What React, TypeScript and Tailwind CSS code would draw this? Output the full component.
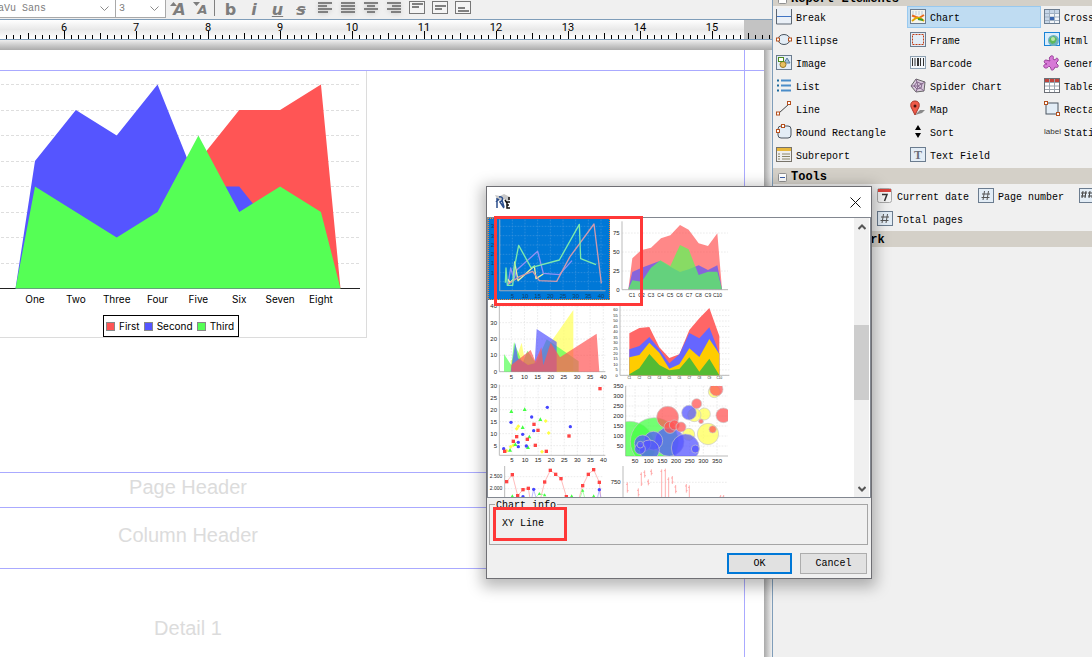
import { useState, type ReactNode } from "react";

type Tool = { label: string; icon: ReactNode };

const frame = <rect x="0.5" y="0.5" width="15" height="14" fill="#e3edf6" stroke="#6b7c8f" />;

const handle = (x: number, y: number) => (
  <rect x={x} y={y} width="3" height="3" fill="#fff" stroke="#b4501e" strokeWidth="1" />
);

const hashIcon = (
  <>
    {frame}
    <path d="M6.5 3L5 12M10.5 3L9 12M4 6h8M3.5 9.5h8" stroke="#555" fill="none" />
  </>
);

const elements: Tool[] = [
  {
    label: "Break",
    icon: (
      <>
        <rect x="0.5" y="-1" width="15" height="16" fill="#eaf0f7" />
        <path d="M0.5 0v15h15V0" fill="none" stroke="#5c6672" />
        <path d="M1 7.5h14" stroke="#3f74c4" />
      </>
    ),
  },
  {
    label: "Chart",
    icon: (
      <>
        <rect x="0.5" y="0.5" width="15" height="14" fill="#f4f4ee" stroke="#6b7c8f" />
        <path d="M2 3h12M2 5h12" stroke="#b9cad8" strokeDasharray="2 1" />
        <path d="M2 6.5l4 1.500 3 1 5-3" stroke="#e86a1c" strokeWidth="2" fill="none" />
        <path d="M2 12l4-3 4 0 4 3" stroke="#e0a800" strokeWidth="2" fill="none" />
        <path d="M8 10l5 1" stroke="#3d9a2a" strokeWidth="2" />
      </>
    ),
  },
  {
    label: "Crosstab",
    icon: (
      <>
        <rect x="0.5" y="0.5" width="15" height="14" fill="#f2f6fa" stroke="#6b7c8f" />
        <path d="M1 1h14v3H1zM1 4h4v10H1z" fill="#c6d6e8" />
        <path d="M1 4.5h14M1 8h14M1 11.5h14M5.5 1v13M10.5 1v13" stroke="#9fb0c2" />
        <rect x="6" y="8" width="4" height="3" fill="#3a66b0" />
      </>
    ),
  },
  {
    label: "Ellipse",
    icon: (
      <>
        <ellipse cx="8" cy="7.5" rx="6" ry="5" fill="#e3edf6" stroke="#4a5560" />
        {handle(0.5, 6)}
        {handle(12.5, 6)}
      </>
    ),
  },
  {
    label: "Frame",
    icon: (
      <>
        {frame}
        <rect x="2.5" y="2.5" width="11" height="10" fill="none" stroke="#c03c14" strokeDasharray="2 1" />
      </>
    ),
  },
  {
    label: "Html",
    icon: (
      <>
        <rect x="0.5" y="0.5" width="15" height="13" fill="#d9ecfb" stroke="#1883d7" />
        <circle cx="9.5" cy="8.5" r="5.5" fill="#6cb0c0" />
        <path d="M6 6l4-2 3 3-2 4-3 1-3-3z" fill="#5cb85c" />
        <circle cx="9" cy="7" r="2" fill="#b8e6a8" />
      </>
    ),
  },
  {
    label: "Image",
    icon: (
      <>
        {frame}
        <path d="M8 8l3-5 3 5z" fill="#9fc0d8" stroke="#5a7fa0" />
        <circle cx="7" cy="9.5" r="3" fill="#e8c060" stroke="#9a7a28" />
        <rect x="2.5" y="2.5" width="5" height="4" fill="#fff" stroke="#4c8a1c" />
      </>
    ),
  },
  {
    label: "Barcode",
    icon: (
      <>
        <rect x="0.5" y="1.5" width="15" height="12" fill="#f2f6fa" stroke="#8ea1b2" />
        <path d="M2.5 3v8M5 3v8M10.5 3v8M13.5 3v8" stroke="#333" />
        <path d="M8 3v8" stroke="#333" strokeWidth="2" />
      </>
    ),
  },
  {
    label: "Generic Element",
    icon: (
      <path
        d="M7 1c2-1 3 1 2 3l2 1c1-3 4-2 3 1l-2 2 2 2c1 2-1 3-3 2l-1 2c-1 2-4 1-3-1l-2-2c-1 2-4 3-5 1s1-3 3-3C0 9-1 5 2 5l4 1c-1-2-1-4 1-5z"
        fill="#d678d6"
        stroke="#9a3f9a"
      />
    ),
  },
  {
    label: "List",
    icon: (
      <>
        <path d="M1 2.5h2M1 7.5h2M1 12.5h2" stroke="#1d6a9c" strokeWidth="2" />
        <path d="M5 2.5h10M5 7.5h10M5 12.5h10" stroke="#4a8cc8" strokeWidth="2" />
      </>
    ),
  },
  {
    label: "Spider Chart",
    icon: (
      <>
        <path d="M6 1l9 3-1 9-8 1-5-6z" fill="#d8c8dc" stroke="#666" />
        <path d="M6 1l2 7M15 4L8 8M14 13L8 8M6 14l2-6M1 8h7M7 4l5 2-1 4-4 1-3-3z" fill="none" stroke="#84688c" />
      </>
    ),
  },
  {
    label: "Table",
    icon: (
      <>
        <rect x="0.5" y="0.5" width="15" height="14" fill="#fff" stroke="#6b6f76" />
        <path d="M1 1h14v3H1z" fill="#c0443c" />
        <path d="M1 4.5h14M1 8h14M1 11.5h14M5.5 1v13M10.5 1v13" stroke="#9aa4ae" />
      </>
    ),
  },
  {
    label: "Line",
    icon: (
      <>
        <path d="M3 12L13 3" stroke="#444" />
        {handle(0.5, 11)}
        {handle(11.5, 0.5)}
      </>
    ),
  },
  {
    label: "Map",
    icon: (
      <>
        <path d="M5 14l5-5 5 0-3 3z" fill="#8a8a8a" />
        <path d="M5 14L1 6C0 2 2 0 5 0s5 2 4 6z" fill="#ef5a48" stroke="#a8382c" />
        <circle cx="5" cy="5" r="1.5" fill="#4a1410" />
      </>
    ),
  },
  {
    label: "Rectangle",
    icon: (
      <>
        <rect x="2" y="2" width="12" height="11" fill="#e3edf6" stroke="#4a5560" />
        {handle(0.5, 0.5)}
        {handle(12.5, 11.5)}
      </>
    ),
  },
  {
    label: "Round Rectangle",
    icon: (
      <>
        <rect x="2" y="2" width="13" height="12" rx="3" fill="#e3edf6" stroke="#4a5560" />
        {handle(5.5, 0.5)}
        {handle(0.5, 5.5)}
      </>
    ),
  },
  { label: "Sort", icon: <path d="M8 1l3 5H5zM8 14l3-5H5z" fill="#000" /> },
  {
    label: "Static Text",
    icon: (
      <text x="0" y="10" fontSize="8" fontFamily="Liberation Sans" fill="#333">
        label
      </text>
    ),
  },
  {
    label: "Subreport",
    icon: (
      <>
        <rect x="0.5" y="0.5" width="15" height="14" fill="#eee" stroke="#77736a" />
        <path d="M1 1h14v3H1z" fill="#e8b83c" />
        <path d="M2 7h2M2 9.5h2M2 12h2M6 7h8M6 9.5h8M6 12h8" stroke="#8a8468" />
      </>
    ),
  },
  {
    label: "Text Field",
    icon: (
      <>
        {frame}
        <text x="8" y="12" fontSize="12" fontWeight="bold" fontFamily="Liberation Serif" textAnchor="middle" fill="#6a6e78">
          T
        </text>
      </>
    ),
  },
];

function Icon({ children }: { children: ReactNode }) {
  return (
    <svg width="16" height="16" viewBox="0 0 16 16" className="shrink-0 overflow-visible">
      {children}
    </svg>
  );
}

function PaletteItem({ tool, selected = false, className = "" }: { tool: Tool; selected?: boolean; className?: string }) {
  return (
    <button
      type="button"
      className={`mb-px flex h-[22px] items-center gap-1 border pl-0.5 text-left whitespace-nowrap ${
        selected ? "border-[#99c9ef] bg-[#bfdcf2]" : "border-transparent"
      } ${className}`}
    >
      <Icon>{tool.icon}</Icon>
      <span className="pt-[3px]">{tool.label}</span>
    </button>
  );
}

function SectionHeader({ title, className = "" }: { title: string; className?: string }) {
  return (
    <h2 className={`flex h-4 items-center gap-1 bg-[#d4d0c8] pt-0.5 pl-[5px] text-[12px] leading-4 font-bold ${className}`}>
      <svg width="9" height="9" viewBox="0 0 9 9">
        <rect x="0.5" y="0.5" width="8" height="8" rx="1" fill="#fff" stroke="#919191" />
        <path d="M2 4.5h5" stroke="#3c5ea8" />
      </svg>
      {title}
    </h2>
  );
}

function Palette() {
  return (
    <aside className="w-[320px] shrink-0 overflow-hidden border-l border-[#7f9db9] bg-[#f0f0f0]">
      <SectionHeader title="Report Elements" className="-mt-2.5" />
      <div className="mb-px grid grid-cols-[134px_134px_134px]">
        {elements.map((tool) => (
          <PaletteItem key={tool.label} tool={tool} selected={tool.label === "Chart"} />
        ))}
      </div>
      <SectionHeader title="Tools" />
      <div className="mt-px grid grid-cols-[101px_101px_101px_101px]">
        <PaletteItem
          className="col-start-2"
          tool={{
            label: "Current date",
            icon: (
              <>
                <rect x="0.5" y="0.5" width="14" height="14" rx="2" fill="#f4f4f4" stroke="#a8a8a8" />
                <path d="M1 1h13v3H1z" fill="#d8433c" />
                <path d="M5 6.5h5L7.5 13" fill="none" stroke="#333" strokeWidth="1.5" />
              </>
            ),
          }}
        />
        <PaletteItem tool={{ label: "Page number", icon: hashIcon }} />
        <PaletteItem
          tool={{
            label: "Page X of Y",
            icon: (
              <>
                {frame}
                <path d="M4 3L3 10M7 3L6 10M2 5h6M2 8h5M11 3l-1 7M14 3l-1 7M9 5h6M9 8h5" stroke="#444" fill="none" />
              </>
            ),
          }}
        />
        <PaletteItem className="col-start-2" tool={{ label: "Total pages", icon: hashIcon }} />
      </div>
      <SectionHeader title="Map Framework" />
    </aside>
  );
}

function Chevron() {
  return (
    <svg width="9" height="6" viewBox="0 0 9 6" className="pointer-events-none absolute top-1.5 right-1.5">
      <path d="M0.5 0.5l4 4 4-4" fill="none" stroke="#8a8a8a" />
    </svg>
  );
}

const alignIcons = [
  "M2 3h14M2 6h9M2 9h14M2 12h10",
  "M2 3h14M2 6h14M2 9h14M2 12h14",
  "M2 3h14M5 6h8M2 9h14M5 12h8",
  "M2 3h14M7 6h9M2 9h14M6 12h10",
];
const boxIcons = ["M4 4h11M4 7h7", "M4 6h11M4 9h7", "M4 8h7M4 11h11"];

function Toolbar() {
  return (
    <div className="flex h-[19px] shrink-0 items-start overflow-hidden bg-[#f0f0f0] text-[#7d7d7d]">
      <div className="relative -ml-6 h-[18px] w-[140px] border-r border-b border-[#a9a9a9] bg-white">
        <select aria-label="Font name" className="h-[17px] w-full appearance-none bg-transparent pl-1 text-[10px] leading-4">
          <option>DejaVu Sans</option>
        </select>
        <Chevron />
      </div>
      <div className="relative h-[18px] w-[50px] border-r border-b border-[#a9a9a9] bg-white">
        <select aria-label="Font size" className="h-[17px] w-full appearance-none bg-transparent pl-[3px] text-[10px] leading-4">
          <option>3</option>
        </select>
        <Chevron />
      </div>
      <div className="flex font-['DejaVu_Sans'] text-[16px] leading-[19px] font-bold [text-shadow:1px_1px_1px_#bbb]">
        <button type="button" aria-label="Increase font size" className="relative w-[23px] pl-1 italic">
          A
          <svg width="7" height="4" className="absolute top-0.5 left-1">
            <path d="M0 4l3.500-4 3.500 4z" fill="#7d7d7d" />
          </svg>
        </button>
        <button type="button" aria-label="Decrease font size" className="relative w-[23px] pl-1 text-[13px] italic">
          A
          <svg width="7" height="4" className="absolute top-0.5 left-1">
            <path d="M0 0l3.500 4 3.500-4z" fill="#7d7d7d" />
          </svg>
        </button>
        <div className="mr-1 ml-0.5 h-4 w-px bg-[#808080]" />
        <button type="button" className="w-[23px]">b</button>
        <button type="button" className="w-6 italic">i</button>
        <button type="button" className="w-[23px] italic underline underline-offset-1">u</button>
        <button type="button" className="w-6 italic line-through">s</button>
        {alignIcons.map((d) => (
          <button key={d} type="button" aria-label="Align text" className="flex h-4 w-[23px] justify-center">
            <svg width="18" height="16" className="drop-shadow-sm">
              <path d={d} stroke="#808080" strokeWidth="2" />
            </svg>
          </button>
        ))}
        {boxIcons.map((d) => (
          <button key={d} type="button" aria-label="Vertical align" className="flex h-4 w-[23px] justify-center">
            <svg width="18" height="16">
              <rect x="1.500" y="1.500" width="15" height="12" fill="#f4f4f4" stroke="#777" />
              <path d={d} stroke="#808080" strokeWidth="2" />
            </svg>
          </button>
        ))}
      </div>
    </div>
  );
}

function Ruler() {
  const ticks = Array.from({ length: 108 }, (_, i) => i - 8);
  return (
    <div className="relative h-[21px] shrink-0 overflow-hidden border-y border-[#7f9db9] bg-linear-to-b from-white via-[#e9e9e9] to-white">
      <div className="absolute inset-y-0 right-0 w-7 bg-[#c3c3c3]" />
      <svg width="100%" height="19" className="absolute inset-0">
        {ticks.map((i) => {
          const x = Math.floor(64 + i * 7.2) + 0.5;
          const top = i % 10 === 0 ? 11 : i % 5 === 0 ? 13 : 15;
          return <path key={i} d={`M${x} ${top}V19`} stroke="#000" />;
        })}
      </svg>
      <div className="relative ml-7 flex font-[Roboto] text-[11px] leading-[15px]">
        {[6, 7, 8, 9, 10, 11, 12, 13, 14, 15].map((n) => (
          <span key={n} className="w-[72px] shrink-0 text-center">
            {n}
          </span>
        ))}
      </div>
    </div>
  );
}

const categories = ["One", "Two", "Three", "Four", "Five", "Six", "Seven", "Eight"];
const series = [
  { name: "First", color: "#ff5555", values: [1, 4, 3, 5, 5, 7, 7, 8] },
  { name: "Second", color: "#5555ff", values: [5, 7, 6, 8, 4, 4, 2, 1] },
  { name: "Third", color: "#55ff55", values: [4, 3, 2, 3, 6, 3, 4, 3] },
];

const catX = (i: number) => 35 + i * 40.85;
const valY = (v: number) => 217.5 - v * 25.5;

function AreaChart() {
  return (
    <div className="w-[367px] border-r border-b border-[#dcdcdc]">
      <svg width="366" height="244" className="block">
        {[1, 2, 3, 4, 5, 6, 7, 8].map((v) => (
          <path key={v} d={`M1 ${Math.floor(valY(v)) + 0.5}H359`} stroke="#dedede" strokeDasharray="3 2" />
        ))}
        <path d="M0 217.500H360" stroke="#222" />
        {series.map((s) => (
          <polygon
            key={s.name}
            fill={s.color}
            points={`15.500,217.500 ${s.values.map((v, i) => `${catX(i)},${valY(v)}`).join(" ")} 340.500,217.500`}
          />
        ))}
        {categories.map((c, i) => (
          <text key={c} x={catX(i)} y="232" fontSize="10" textAnchor="middle" fontFamily="Inter">
            {c}
          </text>
        ))}
      </svg>
      <div className="ml-[103px] flex h-[22px] w-fit items-center gap-1 border border-black pr-1 pl-[2px] font-[Inter] text-[10px] leading-3">
        {series.map((s) => (
          <span key={s.name} className="flex items-center gap-1">
            <span className="size-[9px] border border-[#888]" style={{ backgroundColor: s.color }} />
            {s.name}
          </span>
        ))}
      </div>
    </div>
  );
}

function BandLabel({ children }: { children: ReactNode }) {
  return (
    <p className="w-[376px] pb-1.5 text-center font-['Liberation_Sans'] text-[20px] leading-6 text-[#dcdcdc]">{children}</p>
  );
}

function ReportPage() {
  return (
    <div className="min-h-0 flex-1 overflow-hidden bg-[#f0f0f0]">
      <div className="h-2.5 bg-linear-to-b from-[#eee] to-[#acacac]" />
      <div className="flex h-full">
        <div className="flex flex-1 flex-col bg-white bg-[linear-gradient(#aaaaff,#aaaaff)] bg-[length:1px_100%] bg-[position:right_19px_top] bg-no-repeat">
          <div className="h-[21px] shrink-0 border-b border-[#aaaaff]" />
          <div className="h-[402px] shrink-0 border-b border-[#aaaaff]">
            <AreaChart />
          </div>
          <div className="flex h-[35px] shrink-0 items-center border-b border-[#aaaaff]">
            <BandLabel>Page Header</BandLabel>
          </div>
          <div className="flex h-[61px] shrink-0 items-center border-b border-[#aaaaff]">
            <BandLabel>Column Header</BandLabel>
          </div>
          <div className="flex h-[124px] shrink-0 items-center">
            <BandLabel>Detail 1</BandLabel>
          </div>
        </div>
        <div className="w-2 bg-linear-to-r from-[#a9a9a9] to-[#f0f0f0]" />
      </div>
    </div>
  );
}

type Label = [string, number];

// The preview drawings share one scale: three units to a pixel.
function Axes({
  left,
  right,
  top,
  bottom,
  xs = [],
  ys = [],
  size = 18,
  color = "#222",
  grid = "#e2e2e2",
}: {
  left: number;
  right: number;
  top: number;
  bottom: number;
  xs?: Label[];
  ys?: Label[];
  size?: number;
  color?: string;
  grid?: string;
}) {
  return (
    <g fontFamily="Liberation Sans" fontSize={size} fill={color}>
      {ys.map(([t, y]) => (
        <g key={t}>
          <path d={`M${left} ${y}H${right}`} stroke={grid} strokeWidth="2" strokeDasharray="5 4" />
          <text x={left - 7} y={y + size / 3} textAnchor="end">
            {t}
          </text>
        </g>
      ))}
      {xs.map(([t, x]) => (
        <g key={t}>
          <path d={`M${x} ${top}V${bottom}`} stroke={grid} strokeWidth="2" strokeDasharray="5 4" />
          <text x={x} y={bottom + size + 3} textAnchor="middle">
            {t}
          </text>
        </g>
      ))}
      <path d={`M${left} ${top}V${bottom}H${right}`} fill="none" stroke="#bbb" strokeWidth="3" />
    </g>
  );
}

const fives = (start: number, step: number): Label[] =>
  [5, 10, 15, 20, 25, 30, 35, 40].map((n, i) => [String(n), start + i * step]);

const scatter = {
  red: [[342, 266], [144, 373], [156, 391], [92, 410], [124, 418], [82, 424], [148, 436], [56, 454], [181, 454], [249, 408]],
  blue: [[184, 322], [137, 351], [75, 367], [253, 380], [143, 392], [110, 403], [97, 427], [97, 440], [121, 438], [53, 446]],
  green: [[76, 334], [116, 328], [163, 358], [110, 382], [130, 410], [88, 433], [126, 442], [72, 450]],
  yellow: [[97, 379], [92, 386], [179, 363], [188, 399], [82, 436], [74, 440], [168, 455], [62, 452]],
};

const bubbles: [string, number, number, number][] = [
  ["#44ff44", 430, 440, 76],
  ["#44ff44", 505, 425, 72],
  ["#ffff55", 666, 402, 32],
  ["#ffff55", 655, 342, 18],
  ["#ffff55", 625, 345, 20],
  ["#ffff55", 608, 403, 18],
  ["#ffff55", 685, 275, 18],
  ["#5555ff", 550, 425, 44],
  ["#5555ff", 598, 444, 42],
  ["#5555ff", 502, 422, 28],
  ["#5555ff", 470, 430, 25],
  ["#5555ff", 490, 450, 30],
  ["#5555ff", 462, 447, 16],
  ["#5555ff", 463, 434, 10],
  ["#5555ff", 609, 338, 22],
  ["#5555ff", 628, 447, 12],
  ["#ff5555", 545, 352, 33],
  ["#ff5555", 552, 382, 18],
  ["#ff5555", 565, 375, 15],
  ["#ff5555", 585, 381, 15],
  ["#ff5555", 632, 311, 15],
  ["#ff5555", 691, 268, 20],
  ["#ff5555", 712, 346, 22],
  ["#ff5555", 645, 364, 7],
  ["#ff5555", 680, 388, 11],
];

const stacked = [
  { color: "#ff6666", tops: [100, 84, 81, 142, 174, 163, 90, 55, 24, 108] },
  { color: "#6666ff", tops: [148, 138, 111, 148, 190, 163, 99, 115, 82, 160] },
  { color: "#ffcc00", tops: [172, 165, 128, 158, 206, 193, 145, 171, 117, 162] },
  { color: "#55bb33", tops: [223, 205, 162, 195, 211, 207, 172, 215, 176, 226] },
];

const timeRed = [
  [62, 545], [79, 524], [95, 587], [111, 569], [127, 565], [136, 620], [160, 610], [176, 546], [193, 511], [209, 523],
  [225, 536], [241, 590], [272, 620], [290, 557], [307, 523], [323, 509], [340, 547], [346, 610],
];

const candles = [
  [424, 547, 578], [457, 565, 590], [466, 517, 558], [476, 511, 533], [487, 538, 556], [496, 508, 526],
  [527, 508, 600], [538, 506, 600], [548, 532, 600], [559, 528, 552], [569, 555, 580], [601, 552, 578],
  [610, 556, 600], [704, 585, 600], [713, 585, 600],
];

const previews: { name: string; viewBox: string; drawing: ReactNode }[] = [
  {
    name: "XY Line",
    viewBox: "6 96 366 246",
    drawing: (
      <>
        <rect x="6" y="96" width="366" height="246" fill="#0078d7" />
        <Axes
          left={41}
          right={358}
          top={101}
          bottom={314}
          xs={fives(79, 38)}
          ys={[["35", 121], ["30", 149], ["25", 177], ["20", 205], ["15", 232], ["10", 260], ["5", 287]]}
          color="#0b3f70"
          grid="#3f96de"
        />
        <path d="M41 101V314H358" fill="none" stroke="#6f9cc4" strokeWidth="3" />
        <g fill="none" strokeWidth="4" strokeLinejoin="round">
          <polyline stroke="#9090f4" points="66,296 74,246 84,280 92,252 155,196 172,262 220,266 258,224" />
          <polyline stroke="#f0f09a" points="66,280 72,290 82,280 86,228 96,284 145,240 150,278 172,264" />
          <polyline stroke="#d09aac" points="64,296 100,272 140,256 160,284 212,286 252,212 324,114 346,292" />
          <polyline stroke="#7ceaac" points="58,290 60,246 64,298 80,298 86,240 98,178 135,245 220,222 280,115 284,218 330,236" />
        </g>
        <rect
          x="7.500"
          y="97.500"
          width="363"
          height="243"
          fill="none"
          stroke="#ff8728"
          strokeWidth="3"
          strokeDasharray="3 3"
          strokeDashoffset="1.500"
          shapeRendering="crispEdges"
        />
      </>
    ),
  },
  {
    name: "Area",
    viewBox: "372 96 366 246",
    drawing: (
      <>
        <Axes
          left={408}
          right={726}
          top={106}
          bottom={311}
          ys={[["75", 141], ["50", 198], ["25", 255], ["0", 311]]}
        />
        <g fontFamily="Liberation Sans" fontSize="15" fill="#222" textAnchor="middle">
          {["C1", "C2", "C3", "C4", "C5", "C6", "C7", "C8", "C9", "C10"].map((c, i) => (
            <text key={c} x={438 + i * 28.5} y="332">
              {c}
            </text>
          ))}
        </g>
        <g fillOpacity="0.7">
          <polygon fill="#ff5555" points="427,310 439,217 465,193 495,185 525,157 553,148 582,117 608,131 638,172 666,180 694,142 708,310" />
          <polygon fill="#5555ff" points="427,310 439,258 467,245 495,235 523,224 553,242 582,258 608,250 638,238 666,252 694,238 708,310" />
          <polygon fill="#55ff55" points="427,310 439,283 467,287 495,245 523,223 553,240 582,177 608,190 638,267 666,257 694,257 708,310" />
        </g>
      </>
    ),
  },
  {
    name: "XY Area",
    viewBox: "6 0 366 246",
    drawing: (
      <>
        <Axes
          left={40}
          right={358}
          top={18}
          bottom={215}
          xs={fives(76, 39.4)}
          ys={[["40", 18], ["30", 68], ["20", 117], ["10", 166], ["0", 215]]}
        />
        <g fillOpacity="0.7">
          <polygon fill="#ffff55" points="74,215 74,182 96,160 107,128 118,190 150,190 262,30 262,215" />
          <polygon fill="#55ff55" points="54,215 54,162 76,196 84,126 110,190 124,152 150,190 182,118 278,184 278,215" />
          <polygon fill="#5555ff" points="74,215 88,128 96,175 126,195 146,190 152,87 212,126 212,215" />
          <polygon fill="#ff5555" points="76,215 76,195 134,150 148,184 166,142 172,196 194,128 222,172 332,101 340,215" />
        </g>
      </>
    ),
  },
  {
    name: "Stacked Area",
    viewBox: "372 0 366 246",
    drawing: (
      <>
        <Axes
          left={402}
          right={730}
          top={18}
          bottom={226}
          size={12}
          ys={Array.from({ length: 13 }, (_, i): Label => [String(i * 5), 226 - i * 16.3])}
        />
        {stacked.map((s) => (
          <polygon key={s.color} fill={s.color} points={`430,226 ${s.tops.map((y, i) => `${430 + i * 30},${y}`).join(" ")} 700,226`} />
        ))}
        <g fontFamily="Liberation Sans" fontSize="9" fill="#222" textAnchor="middle">
          {stacked[0].tops.map((_, i) => (
            <text key={i} x={430 + i * 30} y="237">{`C${i + 1}`}</text>
          ))}
        </g>
      </>
    ),
  },
  {
    name: "Scatter",
    viewBox: "6 246 366 246",
    drawing: (
      <>
        <Axes
          left={40}
          right={358}
          top={254}
          bottom={466}
          xs={fives(78, 39.2)}
          ys={[["30", 258], ["25", 293], ["20", 329], ["15", 365], ["10", 401], ["5", 437]]}
        />
        {scatter.yellow.map(([x, y]) => (
          <path key={`${x}-${y}`} d={`M${x - 6} ${y}l6 -6l6 6l-6 6z`} fill="#ffff44" />
        ))}
        {scatter.green.map(([x, y]) => (
          <path key={`${x}-${y}`} d={`M${x - 6} ${y + 5}l6 -11l6 11z`} fill="#44ff44" />
        ))}
        {scatter.blue.map(([x, y]) => (
          <circle key={`${x}-${y}`} cx={x} cy={y} r="5" fill="#4444ff" />
        ))}
        {scatter.red.map(([x, y]) => (
          <rect key={`${x}-${y}`} x={x - 5} y={y - 5} width="10" height="10" fill="#ff4444" />
        ))}
      </>
    ),
  },
  {
    name: "Bubble",
    viewBox: "372 246 366 246",
    drawing: (
      <>
        <Axes
          left={419}
          right={726}
          top={258}
          bottom={468}
          xs={[50, 100, 150, 200, 250, 300, 350].map((n, i): Label => [String(n), 447 + i * 41])}
          ys={[350, 300, 250, 200, 150, 100, 50].map((n, i): Label => [String(n), 258 + i * 30])}
        />
        <clipPath id="bubble-plot">
          <rect x="419" y="258" width="307" height="210" />
        </clipPath>
        <g clipPath="url(#bubble-plot)" fillOpacity="0.75" stroke="#c8c8c8" strokeWidth="2">
          {bubbles.map(([color, x, y, r]) => (
            <circle key={`${x}-${y}`} cx={x} cy={y} r={r} fill={color} />
          ))}
        </g>
      </>
    ),
  },
  {
    name: "Time Series",
    viewBox: "6 492 366 246",
    drawing: (
      <>
        <Axes left={56} right={350} top={498} bottom={700} size={15} ys={[["2.500", 530], ["2.000", 566]]} />
        <polyline points={timeRed.map((p) => p.join(",")).join(" ")} fill="none" stroke="#ff9a9a" strokeWidth="2" />
        <path d="M136 600L143 568L152 600M333 600L340 569L346 600" fill="none" stroke="#9a9aff" strokeWidth="2" />
        <path d="M150 592L160 581L176 585M280 600L290 571L298 600" fill="none" stroke="#8aff8a" strokeWidth="2" />
        {timeRed.map(([x, y]) => (
          <rect key={x} x={x - 5} y={y - 5} width="10" height="10" fill="#ff4444" />
        ))}
        {[[79, 588], [160, 581], [176, 585], [257, 588], [290, 571], [323, 588]].map(([x, y]) => (
          <path key={x} d={`M${x - 5} ${y + 4}l5 -9l5 9z`} fill="#44ff44" />
        ))}
        {[[111, 590], [143, 568], [340, 569]].map(([x, y]) => (
          <circle key={x} cx={x} cy={y} r="5" fill="#4444ff" />
        ))}
      </>
    ),
  },
  {
    name: "High Low",
    viewBox: "372 492 366 246",
    drawing: (
      <>
        <Axes left={411} right={726} top={498} bottom={700} ys={[["750", 547]]} />
        {candles.map(([x, high, low]) => (
          <path key={x} d={`M${x} ${high}V${low}M${x - 4} ${high + 6}H${x}M${x} ${low - 6}H${x + 4}`} stroke="#ff8a8a" strokeWidth="2" />
        ))}
      </>
    ),
  },
];

function ChartDialog() {
  const [chart, setChart] = useState("XY Line");
  return (
    <div
      role="dialog"
      className="absolute top-[186px] left-[486px] w-[386px] border border-[#6f6f74] bg-[#f0f0f0] pb-1 shadow-[0_4px_14px_4px_rgba(0,0,0,0.28)]"
    >
      <div className="flex h-[30px] items-center justify-between bg-white pr-2.5 pl-2">
        <svg width="16" height="16" viewBox="0 0 16 16">
          <path d="M0 1l5 1 4-2 6 3-1 4-6-2-5 2z" fill="#c9c9c9" />
          <path d="M2 4v10M4 3c4-1 5 3 1 5l4 6M7 6l2 7M1 8l3-3" fill="none" stroke="#2c4f8c" strokeWidth="1.5" />
          <path d="M10 6l2 3M15 8h-3v6h3M12 11h2M14 3v3" fill="none" stroke="#111" strokeWidth="1.5" />
        </svg>
        <button type="button" aria-label="Close">
          <svg width="11" height="11" viewBox="0 0 11 11" className="block">
            <path d="M0.500 0.500l10 10M10.500 0.500l-10 10" stroke="#111" />
          </svg>
        </button>
      </div>

      <div className="flex h-[281px] justify-between border border-[#828790] bg-white pr-px">
        <div className="grid h-full auto-rows-[82px] grid-cols-[122px_122px] overflow-hidden">
          {previews.map((p) => (
            <button key={p.name} type="button" aria-label={p.name} onClick={() => setChart(p.name)}>
              <svg width="122" height="82" viewBox={p.viewBox}>
                {p.drawing}
              </svg>
            </button>
          ))}
        </div>
        <div className="flex w-[15px] flex-col bg-[#f0f0f0]">
          <button type="button" aria-label="Scroll up" className="flex h-[17px] items-center justify-center">
            <svg width="8" height="6">
              <path d="M0.500 5l3.500-3.500L7.500 5" fill="none" stroke="#555" strokeWidth="2" />
            </svg>
          </button>
          <div className="mt-[90px] h-[75px] bg-[#cdcdcd]" />
          <button type="button" aria-label="Scroll down" className="mt-auto flex h-[17px] items-center justify-center">
            <svg width="8" height="6">
              <path d="M0.500 1l3.500 3.500L7.500 1" fill="none" stroke="#555" strokeWidth="2" />
            </svg>
          </button>
        </div>
      </div>

      <fieldset className="mr-[3px] ml-[2px] h-[47px] border border-[#a5a5a5] px-[5px]">
        <legend className="h-3 px-px leading-4">Chart info</legend>
        <p className="pt-2 pl-[7px] leading-3">{chart}</p>
      </fieldset>

      <div className="mt-2 flex justify-end gap-2 pr-1">
        <button type="button" className="h-[21px] w-[65px] border-2 border-[#0078d7] bg-[#e1e1e1] pt-px">
          OK
        </button>
        <button type="button" className="h-[21px] w-[67px] border border-[#adadad] bg-[#e1e1e1] pt-px">
          Cancel
        </button>
      </div>

      <div className="pointer-events-none absolute top-[29px] left-[7px] h-[90px] w-[149px] border-3 border-[#ff3838]" />
      <div className="pointer-events-none absolute top-[320px] left-1.5 h-[34px] w-[74px] border-3 border-[#ff3838]" />
    </div>
  );
}

export default function App() {
  return (
    <div className="relative flex h-screen overflow-hidden font-['Liberation_Mono',monospace] text-[10px] leading-4 text-black">
      <main className="flex min-w-0 flex-1 flex-col">
        <Toolbar />
        <Ruler />
        <ReportPage />
      </main>
      <Palette />
      <ChartDialog />
    </div>
  );
}
